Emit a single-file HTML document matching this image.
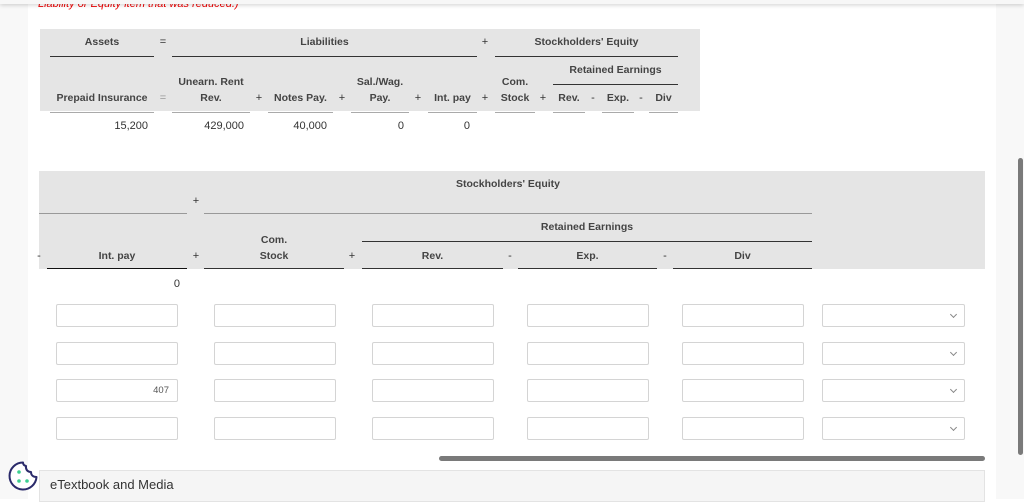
<!DOCTYPE html>
<html><head><meta charset="utf-8"><style>
*{margin:0;padding:0;box-sizing:border-box}
body{width:1024px;height:499px;overflow:hidden;background:#fff;font-family:"Liberation Sans",sans-serif;font-size:11px;color:#333;position:relative}
.a{position:absolute;white-space:nowrap}
.c{text-align:center}
.b{font-weight:bold;color:#444;font-size:10.5px}
.l{position:absolute;height:1px;background:#333}
.g{position:absolute;height:1px;background:#aaa}
.in{position:absolute;width:122px;height:23px;border:1px solid #d4d4d4;border-radius:2px;background:#fff}
.sel{position:absolute;width:143px;height:23px;border:1px solid #d4d4d4;border-radius:2px;background:#fff}
.sel:after{content:"";position:absolute;right:8px;top:7px;width:4px;height:4px;border-right:1px solid #888;border-bottom:1px solid #888;transform:rotate(45deg)}
</style></head><body>
<div class="a" style="left:0;top:0;width:28px;height:499px;background:#f8f8f8"></div>
<div class="a" style="left:996px;top:0;width:28px;height:499px;background:#f8f8f8"></div>
<div class="a" style="left:1018px;top:158px;width:5px;height:297px;background:#7a7a7a;border-radius:3px"></div>
<div class="a" style="left:38px;top:-2px;color:#e00;font-style:italic;font-size:11px">Liability or Equity item that was reduced.)</div>
<div class="a" style="left:0;top:0;width:1024px;height:4px;background:#f7f7f7;box-shadow:0 1px 4px rgba(0,0,0,.2)"></div>

<!-- top table -->
<div class="a" style="left:40px;top:29px;width:660px;height:82px;background:#e5e5e5"></div>
<div class="a c b" style="left:50px;top:36px;width:104px">Assets</div>
<div class="a c" style="left:158px;top:36px;width:10px">=</div>
<div class="a c b" style="left:172px;top:36px;width:305px">Liabilities</div>
<div class="a c" style="left:480px;top:36px;width:10px">+</div>
<div class="a c b" style="left:495px;top:36px;width:183px">Stockholders' Equity</div>
<div class="l" style="left:50px;top:56px;width:104px"></div>
<div class="l" style="left:172px;top:56px;width:305px"></div>
<div class="l" style="left:495px;top:56px;width:183px"></div>
<div class="a c b" style="left:553px;top:64px;width:125px">Retained Earnings</div>
<div class="l" style="left:553px;top:84px;width:125px"></div>
<div class="a c b" style="left:172px;top:76px;width:78px">Unearn. Rent</div>
<div class="a c b" style="left:351px;top:76px;width:58px">Sal./Wag.</div>
<div class="a c b" style="left:495px;top:76px;width:40px">Com.</div>
<div class="a c b" style="left:50px;top:92px;width:104px">Prepaid Insurance</div>
<div class="a c" style="left:158px;top:92px;width:10px;color:#999">=</div>
<div class="a c b" style="left:172px;top:92px;width:78px">Rev.</div>
<div class="a c" style="left:254px;top:92px;width:10px">+</div>
<div class="a c b" style="left:268px;top:92px;width:65px">Notes Pay.</div>
<div class="a c" style="left:337px;top:92px;width:10px">+</div>
<div class="a c b" style="left:351px;top:92px;width:58px">Pay.</div>
<div class="a c" style="left:413px;top:92px;width:10px">+</div>
<div class="a c b" style="left:428px;top:92px;width:49px">Int. pay</div>
<div class="a c" style="left:480px;top:92px;width:10px">+</div>
<div class="a c b" style="left:495px;top:92px;width:40px">Stock</div>
<div class="a c" style="left:538px;top:92px;width:10px">+</div>
<div class="a c b" style="left:553px;top:92px;width:32px">Rev.</div>
<div class="a c" style="left:588px;top:92px;width:10px">-</div>
<div class="a c b" style="left:602px;top:92px;width:32px">Exp.</div>
<div class="a c" style="left:636px;top:92px;width:10px">-</div>
<div class="a c b" style="left:649px;top:92px;width:29px">Div</div>
<div class="g" style="left:50px;top:112px;width:104px"></div>
<div class="g" style="left:172px;top:112px;width:78px"></div>
<div class="g" style="left:268px;top:112px;width:65px"></div>
<div class="g" style="left:351px;top:112px;width:58px"></div>
<div class="g" style="left:428px;top:112px;width:49px"></div>
<div class="g" style="left:495px;top:112px;width:40px"></div>
<div class="g" style="left:553px;top:112px;width:32px"></div>
<div class="g" style="left:602px;top:112px;width:32px"></div>
<div class="g" style="left:649px;top:112px;width:29px"></div>
<div class="a" style="left:50px;top:120px;width:98px;text-align:right">15,200</div>
<div class="a" style="left:172px;top:120px;width:72px;text-align:right">429,000</div>
<div class="a" style="left:268px;top:120px;width:59px;text-align:right">40,000</div>
<div class="a" style="left:351px;top:120px;width:53px;text-align:right">0</div>
<div class="a" style="left:428px;top:120px;width:42px;text-align:right">0</div>

<!-- second table -->
<div class="a" style="left:39px;top:171px;width:946px;height:98px;background:#e5e5e5"></div>
<div class="a c b" style="left:204px;top:178px;width:608px">Stockholders' Equity</div>
<div class="a c" style="left:191px;top:195px;width:10px">+</div>
<div class="g" style="left:39px;top:213px;width:148px;background:#999"></div>
<div class="g" style="left:204px;top:213px;width:608px;background:#999"></div>
<div class="a c b" style="left:362px;top:221px;width:450px">Retained Earnings</div>
<div class="l" style="left:362px;top:241px;width:450px"></div>
<div class="a c b" style="left:204px;top:234px;width:140px">Com.</div>
<div class="a c" style="left:34px;top:250px;width:10px">-</div>
<div class="a c b" style="left:47px;top:250px;width:140px">Int. pay</div>
<div class="a c" style="left:191px;top:250px;width:10px">+</div>
<div class="a c b" style="left:204px;top:250px;width:140px">Stock</div>
<div class="a c" style="left:347px;top:250px;width:10px">+</div>
<div class="a c b" style="left:362px;top:250px;width:141px">Rev.</div>
<div class="a c" style="left:505px;top:250px;width:10px">-</div>
<div class="a c b" style="left:518px;top:250px;width:139px">Exp.</div>
<div class="a c" style="left:660px;top:250px;width:10px">-</div>
<div class="a c b" style="left:673px;top:250px;width:139px">Div</div>
<div class="l" style="left:47px;top:268px;width:140px;background:#111"></div>
<div class="l" style="left:204px;top:268px;width:140px"></div>
<div class="l" style="left:362px;top:268px;width:141px"></div>
<div class="l" style="left:518px;top:268px;width:139px"></div>
<div class="l" style="left:673px;top:268px;width:139px"></div>
<div class="a" style="left:100px;top:278px;width:80px;text-align:right">0</div>

<!-- inputs -->
<div class="in" style="left:56px;top:304px"></div><div class="in" style="left:214px;top:304px"></div><div class="in" style="left:372px;top:304px"></div><div class="in" style="left:527px;top:304px"></div><div class="in" style="left:682px;top:304px"></div><div class="sel" style="left:822px;top:304px"></div>
<div class="in" style="left:56px;top:342px"></div><div class="in" style="left:214px;top:342px"></div><div class="in" style="left:372px;top:342px"></div><div class="in" style="left:527px;top:342px"></div><div class="in" style="left:682px;top:342px"></div><div class="sel" style="left:822px;top:342px"></div>
<div class="in" style="left:56px;top:379px"><span class="a" style="right:8px;top:5px;font-size:9.5px;color:#555">407</span></div><div class="in" style="left:214px;top:379px"></div><div class="in" style="left:372px;top:379px"></div><div class="in" style="left:527px;top:379px"></div><div class="in" style="left:682px;top:379px"></div><div class="sel" style="left:822px;top:379px"></div>
<div class="in" style="left:56px;top:417px"></div><div class="in" style="left:214px;top:417px"></div><div class="in" style="left:372px;top:417px"></div><div class="in" style="left:527px;top:417px"></div><div class="in" style="left:682px;top:417px"></div><div class="sel" style="left:822px;top:417px"></div>

<div class="a" style="left:439px;top:456px;width:546px;height:5px;background:#7a7a7a;border-radius:3px"></div>
<div class="a" style="left:39px;top:470px;width:946px;height:32px;background:#f5f5f5;border:1px solid #e3e3e3"></div>
<div class="a" style="left:50px;top:477px;font-size:13px;color:#333">eTextbook and Media</div>
<svg class="a" style="left:7px;top:460px" width="32" height="32" viewBox="0 0 32 32">
<path d="M16 2.5 A13.5 13.5 0 1 0 29.5 17 C26 17 24 15 24 12 C20.5 12 18.5 9.5 19 6 C17 5.5 16 4 16 2.5 Z" fill="#fff" stroke="#2a2a6a" stroke-width="2" stroke-linejoin="round"/>
<circle cx="12" cy="12" r="1.8" fill="#3ccf91"/><circle cx="12" cy="21" r="1.8" fill="#3ccf91"/><circle cx="20" cy="21" r="1.8" fill="#3ccf91"/>
</svg>
</body></html>
